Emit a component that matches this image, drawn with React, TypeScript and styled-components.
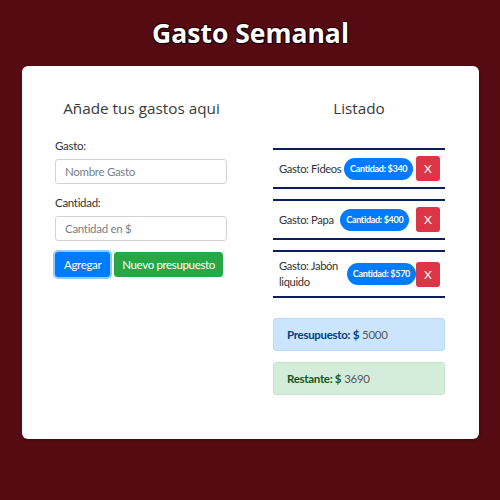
import React from "react";
import styled, { createGlobalStyle } from "styled-components";

const Global = createGlobalStyle`
  html, body { margin: 0; padding: 0; }
  body {
    background: #560b13;
    font-family: "Lato", "Noto Sans", sans-serif;
    color: #212529;
  }
  * { box-sizing: border-box; }
`;

const Page = styled.div`
  width: 500px;
  height: 500px;
  padding: 14px 21px 0 22px;
`;

const Title = styled.h1`
  margin: 0 0 14px;
  text-align: center;
  font-family: "Open Sans", sans-serif;
  font-weight: 700;
  font-size: 26.5px;
  line-height: 38px;
  color: #fff;
  text-shadow: 1px 1px 1px #000, -1px -1px 0 #2a0003, 1px -1px 0 #2a0003, -1px 1px 0 #2a0003;
`;

const Card = styled.div`
  background: #fff;
  border-radius: 6px;
  height: 373px;
  padding: 30px 34px 0 33px;
  display: grid;
  grid-template-columns: 173px 172px;
  column-gap: 45px;
  box-shadow: 1px 1px 3px rgba(0, 0, 0, 0.3);
`;

const Column = styled.div`
  display: flex;
  flex-direction: column;
`;

const Heading = styled.h2`
  margin: 0 0 18px;
  text-align: center;
  font-family: "Open Sans", sans-serif;
  font-weight: 400;
  font-size: 15.3px;
  line-height: 24px;
  color: #3a3a3a;
`;

const Field = styled.div`
  display: flex;
  flex-direction: column;
  margin-bottom: 11px;
`;

const Label = styled.label`
  font-size: 11.5px;
  letter-spacing: -0.3px;
  line-height: 16px;
  margin-bottom: 5px;
  color: #333;
`;

const Input = styled.input`
  width: 172px;
  height: 25px;
  border: 1px solid #ced4da;
  border-radius: 3px;
  padding: 0 9px;
  font-family: "Lato", sans-serif;
  font-size: 11.5px;
  letter-spacing: -0.3px;
  color: #495057;
  &::placeholder { color: #7a7f85; }
`;

const Buttons = styled.div`
  display: flex;
  gap: 4px;
`;

const Button = styled.button<{ $variant: "primary" | "success" }>`
  height: 25px;
  padding: 0 ${(p) => (p.$variant === "primary" ? "8px" : "7px")};
  border-radius: 3px;
  white-space: nowrap;
  font-family: "Lato", sans-serif;
  font-size: 11.5px;
  letter-spacing: -0.35px;
  color: #fff;
  border: 1px solid ${(p) => (p.$variant === "primary" ? "#007bff" : "#28a745")};
  background: ${(p) => (p.$variant === "primary" ? "#007bff" : "#28a745")};
  box-shadow: ${(p) => (p.$variant === "primary" ? "0 0 0 2px rgba(38,143,255,0.5)" : "none")};
`;

const List = styled.ul`
  list-style: none;
  margin: 10px 0 0;
  padding: 0;
  display: flex;
  flex-direction: column;
  gap: 10px;
`;

const Item = styled.li`
  border-top: 2px solid #0a1f5c;
  border-bottom: 2px solid #0a1f5c;
  min-height: 41px;
  padding: 6px 5px 6px 6px;
  display: flex;
  align-items: center;
  justify-content: space-between;
  font-size: 11.2px;
  letter-spacing: -0.35px;
  line-height: 16px;
  color: #333;
`;

const Name = styled.span``;

const Badge = styled.span`
  flex: none;
  background: #007bff;
  color: #fff;
  font-weight: 700;
  font-size: 9px;
  line-height: 22px;
  padding: 0 6px;
  border-radius: 11px;
  letter-spacing: -0.3px;
`;

const Delete = styled.button`
  flex: none;
  width: 24px;
  height: 25px;
  border: none;
  border-radius: 3px;
  background: #dc3545;
  color: #fff;
  font-family: "Lato", sans-serif;
  font-size: 12px;
  padding: 0;
`;

const Alert = styled.div<{ $kind: "info" | "ok" }>`
  margin-top: ${(p) => (p.$kind === "info" ? "20px" : "11px")};
  height: 33px;
  display: flex;
  align-items: center;
  padding: 0 13px;
  border-radius: 3px;
  font-size: 11.5px;
  letter-spacing: -0.3px;
  background: ${(p) => (p.$kind === "info" ? "#cce5ff" : "#d4edda")};
  border: 1px solid ${(p) => (p.$kind === "info" ? "#b8daff" : "#c3e6cb")};
  color: ${(p) => (p.$kind === "info" ? "#004085" : "#155724")};
  strong { margin-right: 3px; }
  span { color: #555; }
`;

const gastos = [
  { nombre: "Fideos", cantidad: 340 },
  { nombre: "Papa", cantidad: 400 },
  { nombre: "Jabón liquido", cantidad: 570 },
];

export default function App() {
  return (
    <>
      <Global />
      <Page>
        <Title>Gasto Semanal</Title>
        <Card>
          <Column>
            <Heading>Añade tus gastos aqui</Heading>
            <Field>
              <Label>Gasto:</Label>
              <Input placeholder="Nombre Gasto" />
            </Field>
            <Field>
              <Label>Cantidad:</Label>
              <Input placeholder="Cantidad en $" />
            </Field>
            <Buttons>
              <Button $variant="primary">Agregar</Button>
              <Button $variant="success">Nuevo presupuesto</Button>
            </Buttons>
          </Column>
          <Column>
            <Heading>Listado</Heading>
            <List>
              {gastos.map((g) => (
                <Item key={g.nombre}>
                  <Name>Gasto: {g.nombre}</Name>
                  <Badge>Cantidad: ${g.cantidad}</Badge>
                  <Delete>X</Delete>
                </Item>
              ))}
            </List>
            <Alert $kind="info">
              <strong>Presupuesto: $</strong>
              <span>5000</span>
            </Alert>
            <Alert $kind="ok">
              <strong>Restante: $</strong>
              <span>3690</span>
            </Alert>
          </Column>
        </Card>
      </Page>
    </>
  );
}
